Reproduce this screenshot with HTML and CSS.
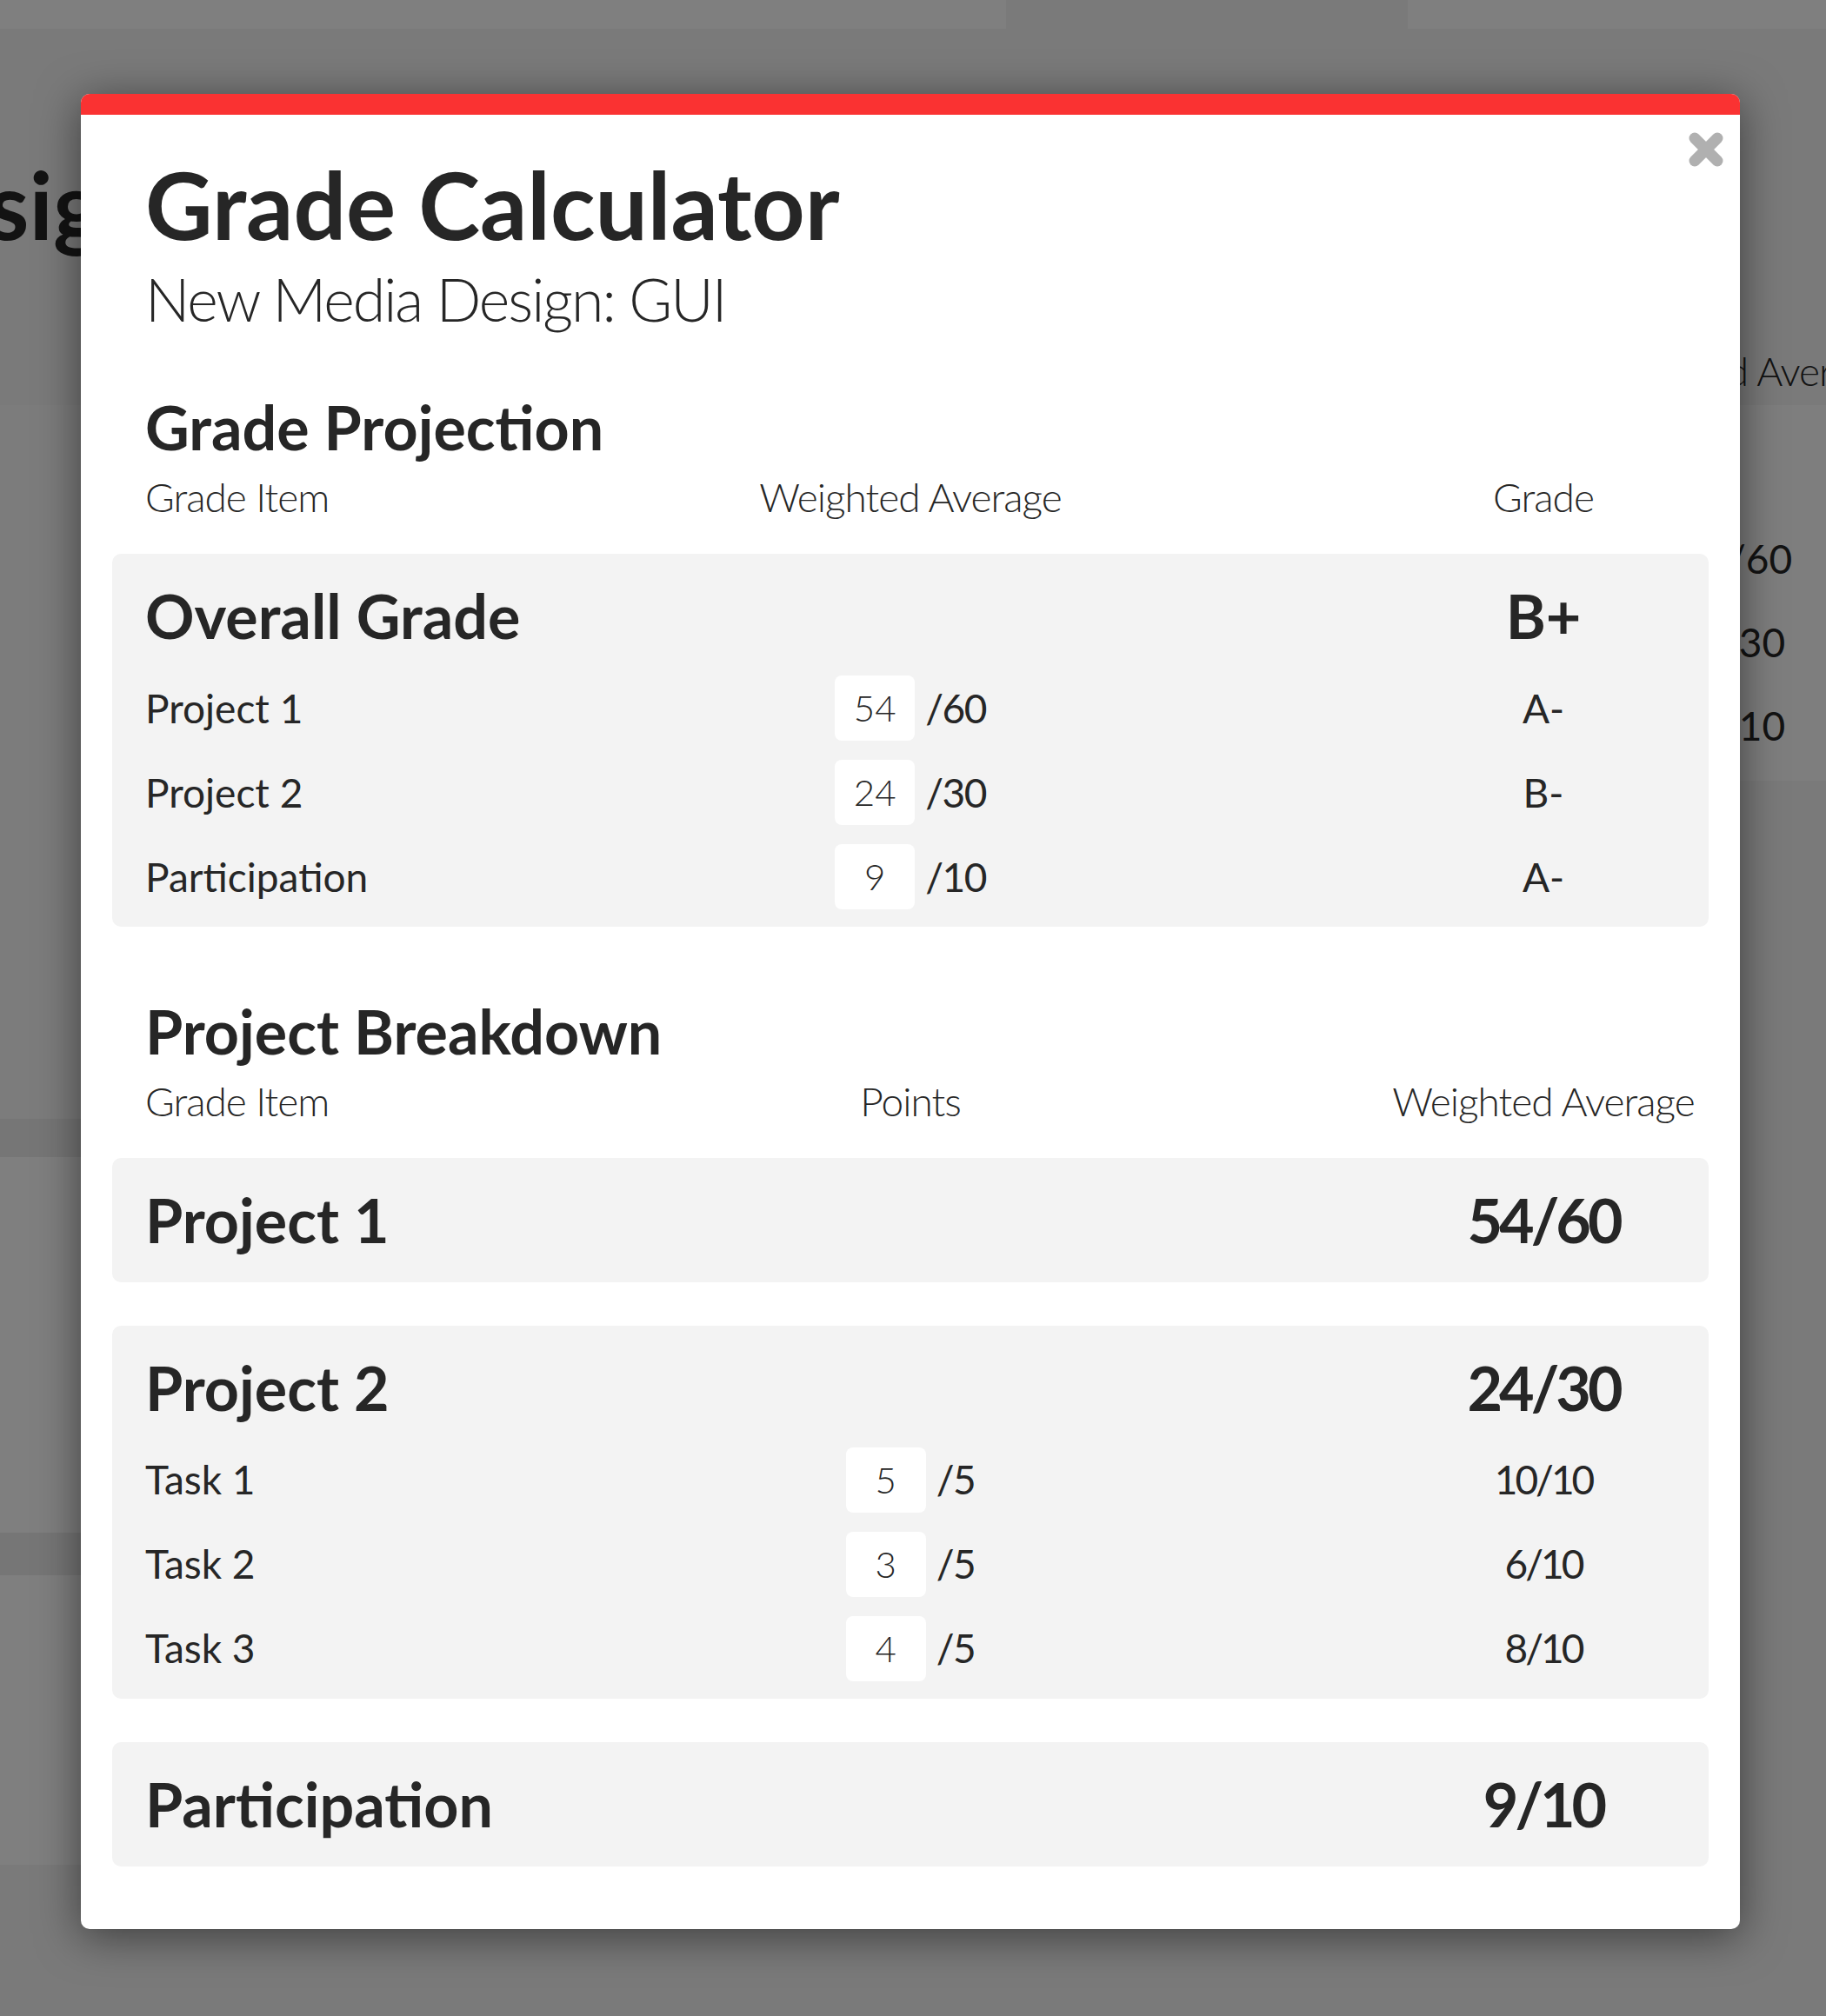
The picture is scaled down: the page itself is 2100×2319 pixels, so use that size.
FILE: index.html
```html
<!DOCTYPE html>
<html lang="en">
<head>
<meta charset="utf-8">
<title>Grade Calculator</title>
<link rel="stylesheet" href="styles.css">
</head>
<body>
<div class="page">
  <div class="page-nav">
    <div class="nav-w nav-w1"></div>
    <div class="nav-gap"></div>
    <div class="nav-w nav-w2"></div>
  </div>
  <div class="page-head">
    <h1 class="page-title">Design</h1>
    <div class="page-label">Weighted Average</div>
  </div>
  <div class="page-body">
    <div class="page-left">
      <div class="pl pl-a"></div>
      <div class="pl-band"></div>
      <div class="pl pl-b"></div>
      <div class="pl-band pl-band2"></div>
      <div class="pl pl-c"></div>
    </div>
    <div class="page-mid"></div>
    <div class="page-right">
      <div class="pr-card">
        <div class="pr-line">/60</div>
        <div class="pr-line pr-shift">/30</div>
        <div class="pr-line pr-shift">/10</div>
      </div>
    </div>
  </div>
</div>

<div class="overlay">
  <div class="modal">
    <div class="modal-bar"></div>
    <button class="modal-close" type="button" aria-label="Close">
      <svg viewBox="0 0 40 40" width="40" height="40" aria-hidden="true">
        <line x1="7" y1="7" x2="33" y2="33"/>
        <line x1="33" y1="7" x2="7" y2="33"/>
      </svg>
    </button>
    <div class="modal-body">
      <header class="mhead">
        <h1 class="mtitle">Grade Calculator</h1>
        <p class="msub">New Media Design: GUI</p>
      </header>

      <section class="sec">
        <h2 class="sec-title">Grade Projection</h2>
        <div class="cols">
          <div class="c1">Grade Item</div>
          <div class="c2"><span>Weighted Average</span></div>
          <div class="c3"><span>Grade</span></div>
        </div>
        <div class="box">
          <div class="box-head">
            <div class="c12">Overall Grade</div>
            <div class="c3"><span>B+</span></div>
          </div>
          <div class="rows">
            <div class="row">
              <div class="c1">Project 1</div>
              <div class="c2"><input class="num" type="text" value="54"><span class="out">/60</span></div>
              <div class="c3"><span>A-</span></div>
            </div>
            <div class="row">
              <div class="c1">Project 2</div>
              <div class="c2"><input class="num" type="text" value="24"><span class="out">/30</span></div>
              <div class="c3"><span>B-</span></div>
            </div>
            <div class="row">
              <div class="c1">Participation</div>
              <div class="c2"><input class="num" type="text" value="9"><span class="out">/10</span></div>
              <div class="c3"><span>A-</span></div>
            </div>
          </div>
        </div>
      </section>

      <section class="sec sec-2">
        <h2 class="sec-title">Project Breakdown</h2>
        <div class="cols">
          <div class="c1">Grade Item</div>
          <div class="c2"><span>Points</span></div>
          <div class="c3"><span>Weighted Average</span></div>
        </div>
        <div class="box box-single">
          <div class="box-head">
            <div class="c12">Project 1</div>
            <div class="c3"><span class="score">54/60</span></div>
          </div>
        </div>
        <div class="box">
          <div class="box-head">
            <div class="c12">Project 2</div>
            <div class="c3"><span class="score">24/30</span></div>
          </div>
          <div class="rows">
            <div class="row">
              <div class="c1">Task 1</div>
              <div class="c2"><input class="num" type="text" value="5"><span class="out">/5</span></div>
              <div class="c3"><span class="frac">10/10</span></div>
            </div>
            <div class="row">
              <div class="c1">Task 2</div>
              <div class="c2"><input class="num" type="text" value="3"><span class="out">/5</span></div>
              <div class="c3"><span class="frac">6/10</span></div>
            </div>
            <div class="row">
              <div class="c1">Task 3</div>
              <div class="c2"><input class="num" type="text" value="4"><span class="out">/5</span></div>
              <div class="c3"><span class="frac">8/10</span></div>
            </div>
          </div>
        </div>
        <div class="box box-single">
          <div class="box-head">
            <div class="c12">Participation</div>
            <div class="c3"><span class="score">9/10</span></div>
          </div>
        </div>
      </section>
    </div>
  </div>
</div>
</body>
</html>
```

FILE: styles.css
```css
* { box-sizing: border-box; }

html, body {
  margin: 0;
  padding: 0;
}

body {
  width: 2100px;
  height: 2319px;
  overflow: hidden;
  position: relative;
  background: #f4f4f4;
  color: #262626;
  font-family: Lato, "Liberation Sans", sans-serif;
}

/* ---------- underlying page ---------- */
.page {
  width: 2100px;
  height: 2319px;
  overflow: hidden;
}

.page-nav {
  display: flex;
  height: 33px;
}
.nav-w { background: #ffffff; }
.nav-w1 { width: 1157px; }
.nav-gap { width: 462px; }
.nav-w2 { flex: 1; }

.page-head {
  display: grid;
  grid-template-columns: 1826px 1fr;
  height: 433px;
}
.page-title {
  margin: 137px 0 0 -153px;
  font-size: 108px;
  line-height: 1.2;
  font-weight: 700;
  white-space: nowrap;
  color: #262626;
}
.page-label {
  margin-top: 366px;
  font-size: 46px;
  line-height: 1.2;
  font-weight: 300;
  letter-spacing: -1px;
  white-space: nowrap;
}

.page-body {
  display: grid;
  grid-template-columns: 140px 1fr 110px;
}
.pl-a { height: 821px; background: #f9f9f9; }
.pl-band { height: 44px; background: #ececec; }
.pl-band2 { height: 49px; }
.pl-b { height: 432px; background: #fefefe; }
.pl-c { height: 333px; background: #fefefe; }

.page-right { margin-left: -3px; }
.pr-card {
  height: 432px;
  background: #fcfcfc;
  padding: 129px 0 0 0;
}
.pr-line {
  font-size: 46px;
  line-height: 96px;
  white-space: nowrap;
}
.pr-shift { margin-left: -8px; }

/* ---------- overlay & modal ---------- */
.overlay {
  position: absolute;
  inset: 0;
  background: rgba(0, 0, 0, 0.5);
}

.modal {
  position: relative;
  width: 1908px;
  margin: 108px 0 0 93px;
  background: #ffffff;
  border-radius: 10px;
  overflow: hidden;
  box-shadow: 0 8px 50px rgba(0, 0, 0, 0.5);
}

.modal-bar {
  height: 24px;
  background: #fa3232;
}

.modal-close {
  position: absolute;
  top: 44px;
  right: 19px;
  width: 40px;
  height: 40px;
  padding: 0;
  border: 0;
  background: transparent;
  cursor: pointer;
}
.modal-close svg {
  display: block;
  stroke: #b0b0b0;
  stroke-width: 13;
  stroke-linecap: round;
}

.modal-body {
  padding: 39px 36px 72px;
}

.mhead {
  padding: 0 38px;
}
.mtitle {
  margin: 0;
  font-size: 107px;
  line-height: 1.2;
  font-weight: 700;
}
.msub {
  margin: 2px 0 0;
  font-size: 68px;
  line-height: 86px;
  font-weight: 300;
  letter-spacing: -2px;
}

.sec-title {
  margin: 62px 0 0;
  padding: 0 38px;
  font-size: 70px;
  line-height: 84px;
  font-weight: 700;
}
.sec-2 .sec-title { margin-top: 78px; }

.cols,
.box-head,
.row {
  display: grid;
  grid-template-columns: 304px 1fr 304px;
  align-items: center;
}

.cols {
  margin-top: 10px;
  padding: 0 38px;
  font-size: 46px;
  line-height: 57.6px;
  font-weight: 300;
  letter-spacing: -1px;
}

.c1 { white-space: nowrap; }
.c12 {
  grid-column: 1 / span 2;
  white-space: nowrap;
}
.c2, .c3 {
  display: flex;
  justify-content: center;
  align-items: center;
  white-space: nowrap;
}

.box {
  margin-top: 36px;
  padding: 29px 38px 20px;
  background: #f3f3f3;
  border-radius: 10px;
}
.box + .box { margin-top: 50px; }
.box-single { padding-bottom: 30px; }

.box-head {
  font-size: 70px;
  line-height: 84px;
  font-weight: 700;
}
.score { letter-spacing: -4px; }

.rows {
  margin-top: 27px;
  display: flex;
  flex-direction: column;
  gap: 22px;
}
.row {
  height: 75px;
  font-size: 46px;
  line-height: 57.6px;
  font-weight: 400;
}
.frac { letter-spacing: -3px; }

.num {
  width: 92px;
  height: 75px;
  margin: 0 12px 0 0;
  padding: 0;
  border: 0;
  border-radius: 8px;
  background: #ffffff;
  color: #262626;
  font-family: Lato, "Liberation Sans", sans-serif;
  font-size: 42px;
  font-weight: 300;
  text-align: center;
  outline: none;
}
.out {
  display: block;
  letter-spacing: -1.5px;
}
```
